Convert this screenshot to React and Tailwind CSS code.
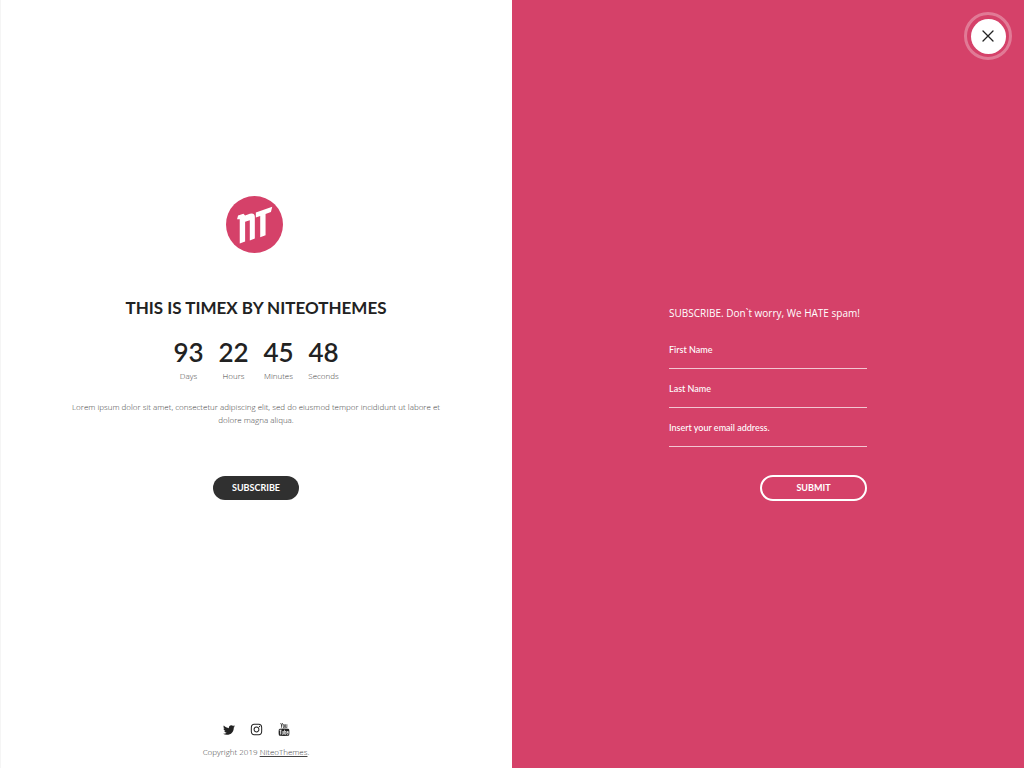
import { FaTwitter, FaInstagram } from "react-icons/fa";

const countdown = [
  ["93", "Days"],
  ["22", "Hours"],
  ["45", "Minutes"],
  ["48", "Seconds"],
];

const fields = [
  { id: "first-name", label: "First Name", type: "text" },
  { id: "last-name", label: "Last Name", type: "text" },
  { id: "email", label: "Insert your email address.", type: "email" },
];

function Logo() {
  return (
    <svg viewBox="0 0 170 170" className="mr-1 size-[57px]" role="img" aria-label="NT">
      <circle cx="85" cy="85" r="85" fill="#d54169" />
      <path
        fill="#fff"
        d="M33 69 L36 58 L52 53 L57 58 L71 53 Q85 49 86 62 L86 127 L71 133 L71 72 L57 77 L57 136 L41 142 L41 69 Z M89 49 L138 32 L134 48 L118 54 L118 117 L102 123 L102 60 L89 64 Z"
      />
    </svg>
  );
}

function YouTubeIcon() {
  return (
    <svg viewBox="128 0 1536 1792" className="h-[13px] w-3" fill="currentColor" aria-hidden="true">
      <path d="M1099 1244v211q0 67-39 67-23 0-45-22v-301q22-22 45-22 39 0 39 67zm338 1v46h-90v-46q0-68 45-68t45 68zm-966-218h107v-94h-312v94h105v569h100v-569zm288 569h89v-494h-89v378q-30 42-57 42-18 0-21-21-1-3-1-35v-364h-89v391q0 49 8 73 12 37 58 37 48 0 102-61v54zm429-148v-197q0-73-9-99-17-56-71-56-50 0-93 54v-217h-89v663h89v-48q45 55 93 55 54 0 71-55 9-27 9-100zm338-10v-13h-91q0 51-2 61-7 36-40 36-46 0-46-69v-87h179v-103q0-79-27-116-39-51-106-51-68 0-107 51-28 37-28 116v173q0 79 29 116 39 51 108 51 72 0 108-53 18-27 21-54 2-9 2-58zm-608-913v-210q0-69-43-69t-43 69v210q0 70 43 70t43-70zm719 751q0 234-26 350-14 59-58 99t-102 46q-184 21-555 21t-555-21q-58-6-102.500-46t-57.500-99q-26-112-26-350 0-234 26-350 14-59 58-99t103-47q183-20 554-20t555 20q58 7 102.500 47t57.500 99q26 112 26 350zm-998-1276h102l-121 399v271h-100v-271q-14-74-61-212-37-103-65-187h106l71 263zm370 333v175q0 81-28 118-38 51-106 51-67 0-105-51-28-38-28-118v-175q0-80 28-117 38-51 105-51 68 0 106 51 28 37 28 117zm335-162v499h-91v-55q-53 62-103 62-46 0-59-37-8-24-8-75v-394h91v367q0 33 1 35 3 22 21 22 27 0 57-43v-381h91z" />
    </svg>
  );
}

export default function App() {
  return (
    <div className="grid min-h-screen grid-cols-2 bg-white font-['Lato','Open_Sans',sans-serif] text-[#222]">
      <main className="flex flex-col items-center px-14 pb-2 shadow-[inset_1px_0_#f5f5f5]">
        <div className="flex flex-1 flex-col items-center justify-center pb-7 text-center">
          <Logo />
          <h1 className="mt-[43px] text-[17px] leading-6 font-bold">THIS IS TIMEX BY NITEOTHEMES</h1>
          <dl className="mt-4 grid grid-cols-4">
            {countdown.map(([value, unit]) => (
              <div key={unit} className="flex w-[45px] flex-col-reverse">
                <dt className="font-['Open_Sans',sans-serif] text-[8px] leading-4 font-light text-[#444]">{unit}</dt>
                <dd className="text-[26px] leading-8 font-semibold">{value}</dd>
              </div>
            ))}
          </dl>
          <p className="mt-4 max-w-96 font-['Open_Sans',sans-serif] text-[8px] leading-[13px] font-light text-[#444]">
            Lorem ipsum dolor sit amet, consectetur adipiscing elit, sed do eiusmod tempor incididunt ut labore et dolore magna aliqua.
          </p>
          <button type="button" className="mt-[50px] h-6 w-[86px] rounded-full bg-[#303030] text-[9px] font-bold text-white">
            SUBSCRIBE
          </button>
        </div>
        <footer className="flex flex-col items-center gap-2">
          <nav className="flex items-center gap-[15px]" aria-label="Social media">
            <a href="#twitter" aria-label="Twitter"><FaTwitter className="size-3" /></a>
            <a href="#instagram" aria-label="Instagram"><FaInstagram className="size-[13px]" /></a>
            <a href="#youtube" aria-label="YouTube"><YouTubeIcon /></a>
          </nav>
          <p className="font-['Open_Sans',sans-serif] text-[8px] leading-4 font-light text-[#444]">
            Copyright 2019 <a href="#niteothemes" className="underline">NiteoThemes</a>.
          </p>
        </footer>
      </main>

      <aside className="relative flex items-center justify-center bg-[#d54169] text-white">
        <button
          type="button"
          aria-label="Close"
          className="absolute top-3 right-3 flex size-12 items-center justify-center rounded-full border-3 border-white/30"
        >
          <span className="flex size-[35px] items-center justify-center rounded-full bg-white">
            <svg viewBox="0 0 12 12" className="size-3" fill="none" stroke="#222" strokeWidth="1.3" strokeLinecap="round" aria-hidden="true">
              <path d="M1 1 11 11M11 1 1 11" />
            </svg>
          </span>
        </button>
        <form className="mt-[38px] w-[198px]" onSubmit={(event) => event.preventDefault()}>
          <h2 className="font-['Open_Sans',sans-serif] text-[10px] leading-4 font-medium whitespace-nowrap">SUBSCRIBE. Don`t worry, We HATE spam!</h2>
          <div className="mt-[9px] mb-7">
            {fields.map(({ id, label, type }) => (
              <div key={id} className="h-[39px] border-b border-white/70">
                <input
                  id={id}
                  name={id}
                  type={type}
                  aria-label={label}
                  placeholder={label}
                  className="block h-full w-full bg-transparent text-[9px] leading-4 font-medium outline-none placeholder:text-white"
                />
              </div>
            ))}
          </div>
          <button type="submit" className="ml-auto block h-[26px] w-[107px] rounded-full border-2 border-white text-[9px] font-bold">
            SUBMIT
          </button>
        </form>
      </aside>
    </div>
  );
}
